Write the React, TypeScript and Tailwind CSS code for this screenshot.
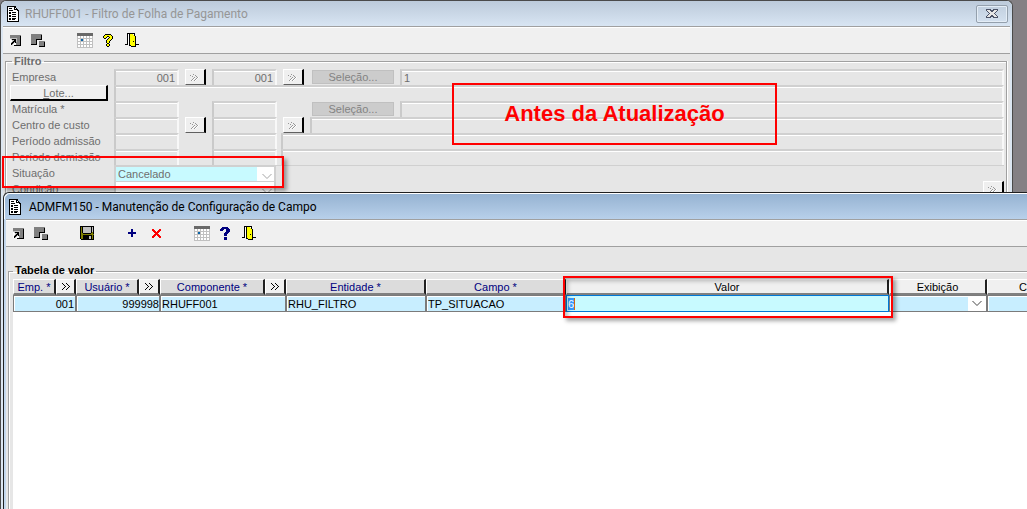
import React from 'react';

type PxProps = { rows: string[]; colors: Record<string, string>; label: string };

// draws a small bitmap icon, one character per pixel
function Px({ rows, colors, label }: PxProps) {
  const w = Math.max(...rows.map(r => r.length));
  const cells: React.ReactNode[] = [];
  rows.forEach((row, y) => {
    let x = 0;
    while (x < row.length) {
      const c = row[x];
      let n = 1;
      while (row[x + n] === c) n++;
      if (colors[c]) cells.push(<rect key={`${x}-${y}`} x={x} y={y} width={n} height={1} fill={colors[c]} />);
      x += n;
    }
  });
  return (
    <svg width={w} height={rows.length} viewBox={`0 0 ${w} ${rows.length}`} shapeRendering="crispEdges" role="img" aria-label={label} className="block shrink-0">
      {cells}
    </svg>
  );
}

const C = { k: '#000000', w: '#ffffff', g: '#808080', y: '#ffff00', n: '#00007f', r: '#ff0000', o: '#808000', s: '#c0c0c0', d: '#696969', b: '#0a64a8' };

const DOC = [
  'kkkkkkkkk...', 'kwwwwwwkk...', 'kwkkkwwkwk..', 'kwwwwwwkkkk.', 'kwkkkkwwwwkk', 'kwwwwwwwwwwk', 'kwkkwkkkkwwk', 'kwkkwwwwwwwk',
  'kwwwwkkkkwwk', 'kwkkwwwwwwwk', 'kwkkwkkkkwwk', 'kwwwwwwwwwwk', 'kwkkwkkkkwwk', 'kwkkwkkkwwwk', 'kwwwwwwwwwwk', 'kkkkkkkkkkkk',
];
const ENTER = ['ggggggggggg', 'ggggggggggk', 'ggggggggggk', 'sssssssgggk', 'wskkkksgggk', 'wwsskksgggk', 'wwskkksgggk', 'wskkskggggk', 'wkkswwggggk', 'wkswwwggggk', '....kkkkkkk'];
const CASCADE = [
  'ggggggggggg...', 'ggggggggggk...', 'ggggggggggk...', 'ggggggggggk...', 'ggggggggggk...', 'gggggkkkkkk...', 'gggggk........',
  'gggggk..gggggg', 'gggggk..gggggk', 'gggggk..gggggk', 'kkkkkk..gggggk', '........gggggk', '........kkkkkk',
];
const GRID = [
  'dddddddddddddddd', 'dddddddddddddddd', 'dddddddddddddddd', 'swwswwswwswwswws', 'swwswwswwswwswws', 'ssssssssssssssss', 'swwsbbswwswwswws', 'swwsbbswwswwswws',
  'ssssssssssssssss', 'swwswwswwswwswws', 'swwswwswwswwswws', 'ssssssssssssssss', 'swwswwswwswwswws', 'swwswwswwswwswws', 'ssssssssssssssss',
];
const HELP_Y = ['..kkkkkk..', '.kyyyyyyk.', 'kyyykkyyyk', 'kyyk..kyyk', '.kk..kyyyk', '....kyyyk.', '...kyyyk..', '...kyyk...', '...kyyk...', '....kk....', '...kyyk...', '...kyyk...', '....kk....'];
const HELP_N = ['..nnnnnn..', '.nnnnnnnn.', 'nnnn..nnnn', 'nnn...nnnn', '......nnnn', '.....nnnn.', '....nnnn..', '....nnn...', '....nnn...', '..........', '....nnn...', '....nnn...', '....nnn...'];
const DOOR = [
  '..kkkkkkkk....', '..kwkyyywk....', '..kwkyyyyk....', '..kwkyyyyyk...', '..kwkyyyyyk...', '..kwkyyyyyk...', '..kwkyyyyyk...',
  '..kwkyyyyyk...', '..kwkyyykyk...', '..kwkyyyyyk...', '..kwkyyyyyk...', 'kkkwkyyyyykkkk', '....kkyyyyk...', '......kkkkk...',
];
const DISK = [
  'kkkkkkkkkkkkkk', 'kokssssssssksk', 'kokssssssssksk', 'kokssssssssksk', 'kokssssssssksk', 'kokssssssssksk', 'koksssssssskok', 'kookkkkkkkkook',
  'koooooooooooook', 'kookkkkkkkkkok', 'kookkkkkksskok', 'kookkkkkksskok', 'kookkkkkksskok', '.kkkkkkkkkkkkk',
].map(r => r.slice(0, 14));
const PLUS = ['...nn...', '...nn...', '...nn...', 'nnnnnnnn', 'nnnnnnnn', '...nn...', '...nn...', '...nn...'];
const DELETE = ['rr.....rr', 'rrr...rrr', '.rrr.rrr.', '..rrrrr..', '...rrr...', '..rrrrr..', '.rrr.rrr.', 'rrr...rrr', 'rr.....rr'];
const CHEVRONS = ['k...k...', '.k...k..', '..k...k.', '...k...k', '..k...k.', '.k...k..', 'k...k...'];
const LOOKUP = ['...g......', 'g....g....', '..g...g...', '....g..gw.', '...gw.gw..', '..gw.gw...', '.gw.gw....'];
const CLOSE = ['kkkkk..kkkkk', 'kwwwkkkkwwwk', '.kwwwkkwwwk.', '..kwwwwwwk..', '...kwwwwk...', '..kwwwwwwk..', '.kwwwkkwwwk.', 'kwwwkkkkwwwk', 'kkkkk..kkkkk'];

function Tool({ rows, label, className = '' }: { rows: string[]; label: string; className?: string }) {
  return (
    <button type="button" className={`flex h-6 shrink-0 items-center justify-center ${className}`}>
      <Px rows={rows} colors={C} label={label} />
    </button>
  );
}

const field = 'h-4 min-w-0 rounded-none border-l-2 border-t-2 border-r-2 border-t-[#d0d0d0] border-l-[#cacaca] border-r-[#f8f8f8] bg-[#e6e6e6] shadow-[inset_0_1px_0_#fff] px-0.5 outline-none';

function Field({ label, className = '', value = '' }: { label: string; className?: string; value?: string }) {
  return <input aria-label={label} defaultValue={value} className={`${field} ${className}`} />;
}

function Lookup({ label }: { label: string }) {
  return (
    <button type="button" className="flex h-4 w-[21px] shrink-0 items-center justify-center border-l border-t border-r-2 border-b border-l-white border-t-white border-r-black border-b-[#606060] bg-[#efefef]">
      <Px rows={LOOKUP} colors={{ g: '#969696', w: '#ffffff' }} label={label} />
    </button>
  );
}

function Select({ label, value, color }: { label: string; value: string; color: string }) {
  return (
    <div className="relative h-4 w-[162px] border-x-2 border-t border-[#d0d0d0] bg-white">
      <select id={label} className={`block h-3.5 w-[141px] appearance-none px-0.5 leading-3 outline-none ${color}`}>
        <option>{value}</option>
      </select>
      <svg className="pointer-events-none absolute right-0.5 top-1.5" width="10" height="7" viewBox="0 0 10 7" fill="none" stroke="#a5a5a5"><path d="M0.5 1 5 5.5 9.5 1" /></svg>
    </div>
  );
}

function FilterWindow() {
  return (
    <section className="mr-3.5 h-full rounded-t-md border-x border-t border-[#4a4a4a] bg-[#dce6f1] text-[#6e6e6e]">
      <header className="flex h-[25px] items-center rounded-t-md bg-linear-to-b from-[#bccada] to-[#d8e5f3] pl-1.5 pr-1">
        <Px rows={DOC} colors={C} label="Documento" />
        <h1 className="ml-1.5 font-[Roboto,sans-serif] text-xs text-[#969696]">RHUFF001 - Filtro de Folha de Pagamento</h1>
        <button type="button" className="ml-auto flex h-[18px] w-8 items-center justify-center rounded-xs border border-[#94a0ad] shadow-[inset_0_0_0_1px_#e4edf6]">
          <Px rows={CLOSE} colors={{ k: '#4b5266', w: '#e6e6e6' }} label="Fechar" />
        </button>
      </header>
      <div className="mr-0.5 ml-0.5 bg-[#e6e6e6]">
        <div className="flex h-7 items-center border-y border-[#a0a0a0] bg-[#f0f0f0] pl-1.5 shadow-[inset_0_1px_0_#fff]">
          <Tool rows={ENTER} label="Executar" className="w-3" />
          <Tool rows={CASCADE} label="Janelas" className="ml-2.5 w-3.5" />
          <Tool rows={GRID} label="Calendário" className="ml-8 w-4" />
          <Tool rows={HELP_Y} label="Ajuda" className="ml-2.5 w-2.5" />
          <Tool rows={DOOR} label="Sair" className="ml-3 w-3.5" />
        </div>
        <fieldset className="mr-[3px] ml-0.5 min-w-0 border border-[#a0a0a0] pl-1 shadow-[inset_1px_1px_0_#fff,1px_0_0_#fff]">
          <legend className="ml-0.5 h-[15px] px-0.5 text-[11px] leading-[15px] font-bold">Filtro</legend>
          <div className="mr-0.5 grid grid-cols-[104px_minmax(0,1fr)] auto-rows-[16px] items-center text-[11px] leading-4">
            <span className="pl-0.5">Empresa</span>
            <div className="flex">
              <Field label="Empresa inicial" value="001" className="w-[65px] text-right" />
              <div className="ml-1.5"><Lookup label="Buscar empresa inicial" /></div>
              <Field label="Empresa final" value="001" className="ml-1.5 w-[65px] text-right" />
              <div className="ml-1.5"><Lookup label="Buscar empresa final" /></div>
              <button type="button" className="ml-2 h-3.5 w-[82px] self-center border border-[#c0c0c0] bg-[#cccccc] leading-3 text-[#838383]">Seleção...</button>
              <Field label="Quantidade" value="1" className="ml-1.5 flex-1" />
            </div>
            <button type="button" className="mr-1.5 h-4 border-r-2 border-b-2 border-l border-t border-l-white border-t-white border-r-black border-b-black bg-[#f0f0f0] leading-3"><u>L</u>ote...</button>
            <Field label="Lote" className="w-full" />
            <span className="pl-0.5">Matrícula *</span>
            <div className="flex">
              <Field label="Matrícula inicial" className="w-[65px]" />
              <Field label="Matrícula final" className="ml-[33px] w-[65px]" />
              <button type="button" className="ml-[35px] h-3.5 w-[82px] self-center border border-[#c0c0c0] bg-[#cccccc] leading-3 text-[#838383]">Seleção...</button>
              <Field label="Matrículas selecionadas" className="ml-1.5 flex-1" />
            </div>
            <span className="pl-0.5">Centro de custo</span>
            <div className="flex">
              <Field label="Centro de custo inicial" className="w-[65px]" />
              <div className="ml-1.5"><Lookup label="Buscar centro inicial" /></div>
              <Field label="Centro de custo final" className="ml-1.5 w-[65px]" />
              <div className="ml-1.5"><Lookup label="Buscar centro final" /></div>
              <Field label="Descrição do centro" className="ml-1.5 flex-1" />
            </div>
            {['Período admissão', 'Período demissão'].map(name => (
              <React.Fragment key={name}>
                <span className="pl-0.5">{name}</span>
                <div className="flex">
                  <Field label={`${name} inicial`} className="w-[65px]" />
                  <Field label={`${name} final`} className="ml-[33px] w-[65px]" />
                  <Field label={`${name} descrição`} className="ml-1 flex-1" />
                </div>
              </React.Fragment>
            ))}
            <label htmlFor="Situação" className="pl-0.5">Situação</label>
            <div className="border-t border-[#d0d0d0]">
              <Select label="Situação" value="Cancelado" color="bg-[#c8faff]" />
            </div>
            <label htmlFor="Condição" className="pl-0.5">Condição</label>
            <div className="flex justify-between">
              <Select label="Condição" value="" color="bg-white" />
              <Lookup label="Buscar condição" />
            </div>
          </div>
        </fieldset>
      </div>
    </section>
  );
}

const head = 'h-4 border-l border-t border-r-2 border-b-2 border-l-white border-t-white border-r-[#202020] border-b-[#808080] p-0 font-normal';
const cell = 'h-[17px] border border-[#7b7b7b] bg-[#c8eeff] p-0 shadow-[inset_1px_1px_0_#fff]';

function FindHead({ label }: { label: string }) {
  return (
    <th className={`${head} bg-[#f0f0f0]`}>
      <button type="button" className="flex h-3 w-full items-center justify-center"><Px rows={CHEVRONS} colors={C} label={label} /></button>
    </th>
  );
}

function ConfigWindow() {
  return (
    <section className="absolute top-[192px] right-0 bottom-0 left-[3px] flex flex-col rounded-tl-md border-t border-l border-[#202020] bg-[#c3d7ec] text-black">
      <header className="flex h-[26px] shrink-0 items-center rounded-tl-md border-t border-l border-white bg-linear-to-b from-[#96b3d2] to-[#b8d0ea] pl-1">
        <Px rows={DOC} colors={C} label="Documento" />
        <h2 className="ml-2 font-[Roboto,sans-serif] text-xs">ADMFM150 - Manutenção de Configuração de Campo</h2>
      </header>
      <div className="ml-0.5 flex min-h-0 flex-1 flex-col bg-[#e6e6e6]">
        <div className="flex h-7 shrink-0 items-center border-y border-[#a0a0a0] bg-[#f0f0f0] pl-1.5 shadow-[inset_0_1px_0_#fff]">
          <Tool rows={ENTER} label="Executar" className="w-3" />
          <Tool rows={CASCADE} label="Janelas" className="ml-2.5 w-3.5" />
          <Tool rows={DISK} label="Salvar" className="ml-8 w-3.5" />
          <Tool rows={PLUS} label="Incluir" className="ml-8 w-3" />
          <Tool rows={DELETE} label="Excluir" className="ml-3 w-3" />
          <Tool rows={GRID} label="Calendário" className="ml-8 w-4" />
          <Tool rows={HELP_N} label="Ajuda" className="ml-2.5 w-2.5" />
          <Tool rows={DOOR} label="Sair" className="ml-3 w-3.5" />
        </div>
        <fieldset className="mt-4 ml-0.5 min-h-0 min-w-0 flex-1 overflow-hidden border-t border-l border-[#a0a0a0] pl-1 shadow-[inset_1px_1px_0_#fff]">
          <legend className="h-4 px-0.5 text-[11px] leading-[15px] font-bold">Tabela de valor</legend>
          <div className="h-full bg-white">
            <table className="w-full min-w-[1020px] table-fixed border-separate border-spacing-0 text-[11px] leading-3">
              <colgroup>
                <col className="w-[43px]" /><col className="w-5" /><col className="w-[63px]" /><col className="w-[21px]" /><col className="w-[105px]" /><col className="w-[21px]" />
                <col className="w-[140px]" /><col className="w-[140px]" /><col className="w-[323px]" /><col className="w-[98px]" /><col />
              </colgroup>
              <thead>
                <tr className="bg-[#dcdcdc] text-[#00007f]">
                  <th className={head}>Emp. *</th>
                  <FindHead label="Buscar empresa" />
                  <th className={head}>Usuário *</th>
                  <FindHead label="Buscar usuário" />
                  <th className={head}>Componente *</th>
                  <FindHead label="Buscar componente" />
                  <th className={head}>Entidade *</th>
                  <th className={head}>Campo *</th>
                  <th className={`${head} bg-[#f0f0f0] text-black`}>Valor</th>
                  <th className={`${head} bg-[#f0f0f0] text-black`}>Exibição</th>
                  <th className="h-4 overflow-hidden border-t border-b-2 border-l border-t-white border-b-[#808080] border-l-white bg-[#f0f0f0] p-0 text-right font-normal text-black">Co</th>
                </tr>
              </thead>
              <tbody>
                <tr>
                  <td colSpan={2} className={`${cell} pr-px text-right`}>001</td>
                  <td colSpan={2} className={`${cell} text-right`}>999998</td>
                  <td colSpan={2} className={`${cell} pl-px`}>RHUFF001</td>
                  <td className={`${cell} pl-px`}>RHU_FILTRO</td>
                  <td className={`${cell} pl-px`}>TP_SITUACAO</td>
                  <td className="h-[17px] border border-[#0078d7] bg-[#c8faff] p-0 pl-px"><span className="inline-block border-r border-[#d06a10] bg-[#3399ff] text-white">6</span></td>
                  <td className={cell}>
                    <div className="flex justify-end">
                      <select aria-label="Exibição" className="h-3.5 min-w-0 flex-1 appearance-none outline-none" />
                      <span className="flex h-3.5 w-[18px] items-center justify-center bg-white">
                        <svg width="10" height="7" viewBox="0 0 10 7" fill="none" stroke="#444"><path d="M0.5 1 5 5.5 9.5 1" /></svg>
                      </span>
                    </div>
                  </td>
                  <td className={cell} />
                </tr>
              </tbody>
            </table>
          </div>
        </fieldset>
      </div>
    </section>
  );
}

export default function App() {
  return (
    <main className="relative h-screen overflow-hidden bg-[#848084] font-['Liberation_Sans',Arial,sans-serif]">
      <FilterWindow />
      <div className="pointer-events-none absolute top-[156px] left-0.5 h-8 w-[282px] border-2 border-[#ff0000] shadow-[3px_3px_4px_rgba(0,0,0,0.35)]" />
      <div className="absolute top-[83px] left-[452px] flex h-[62px] w-[325px] items-center justify-center border-2 border-[#ff0000] text-[22px] leading-7 font-bold text-[#ff0000]">Antes da Atualização</div>
      <ConfigWindow />
      <div className="pointer-events-none absolute top-[276px] left-[563px] h-[42px] w-[330px] border-2 border-[#ff0000] shadow-[3px_3px_4px_rgba(0,0,0,0.35),inset_3px_3px_4px_rgba(0,0,0,0.25)]" />
    </main>
  );
}
